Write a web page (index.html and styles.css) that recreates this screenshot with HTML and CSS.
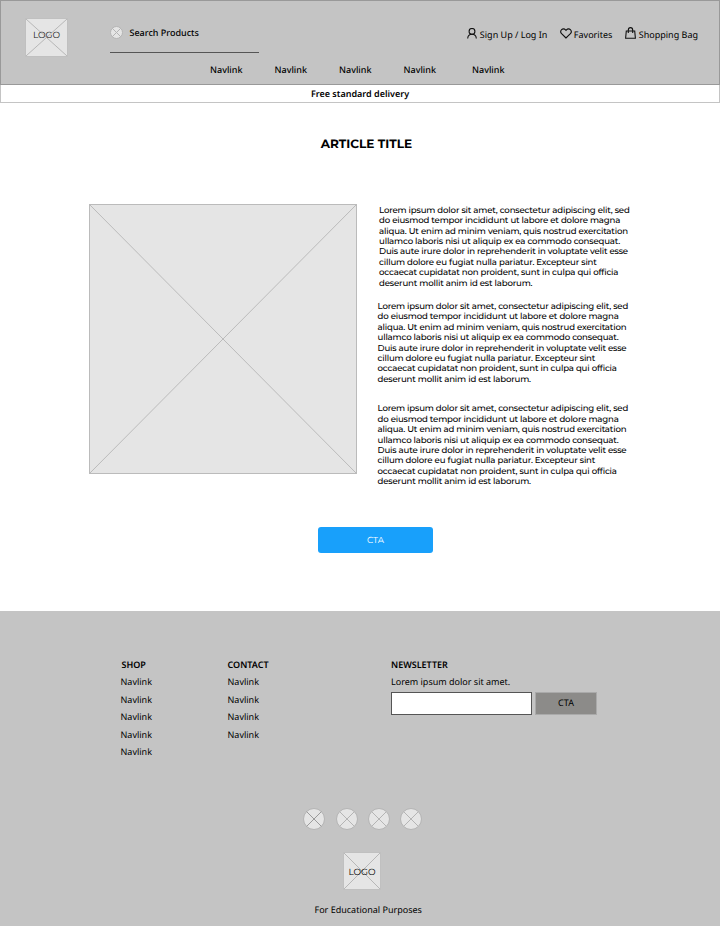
FILE: index.html
```html
<!DOCTYPE html>
<html lang="en">
<head>
<meta charset="utf-8">
<title>Article</title>
<link rel="stylesheet" href="styles.css">
</head>
<body>
<header class="header">
  <div class="logo">
    <svg viewBox="0 0 43 39" preserveAspectRatio="none"><path d="M0 0L43 39M43 0L0 39"/></svg>
    <span>LOGO</span>
  </div>
  <div class="header-main">
    <div class="top-row">
      <div class="search">
        <svg class="search-icon" viewBox="0 0 13 13"><circle cx="6.5" cy="6.5" r="6"/><path d="M2.3 2.3l8.4 8.4M10.7 2.3l-8.4 8.4"/></svg>
        <span>Search Products</span>
      </div>
      <div class="account">
        <a class="signup"><svg width="10" height="11" viewBox="0 0 10 11"><circle cx="5" cy="3.4" r="2.9"/><path d="M.7 10.5C.8 7.7 2.4 6.2 5 6.2s4.2 1.5 4.3 4.3"/></svg><span>Sign Up / Log In</span></a>
        <a class="favorites"><svg width="12" height="11" viewBox="0 0 12 11"><path d="M6 10L1.6 5.7C-.9 3 2.8-1 5.6 1.8L6 2.3l.4-.5C9.200-1 12.900 3 10.400 5.700Z"/></svg><span>Favorites</span></a>
        <a class="bag"><svg width="11" height="12" viewBox="0 0 11 12"><path d="M1.300 4h8.400l.7 7.300H.6ZM3.300 6V3.200C3.300-.2 7.700-.2 7.700 3.200V6"/></svg><span>Shopping Bag</span></a>
      </div>
    </div>
    <nav class="nav"><a>Navlink</a><a>Navlink</a><a>Navlink</a><a>Navlink</a><a>Navlink</a></nav>
  </div>
</header>
<div class="delivery">Free standard delivery</div>
<main>
  <h1>ARTICLE TITLE</h1>
  <div class="article">
    <svg class="picture" viewBox="0 0 268 270"><rect x=".5" y=".5" width="267" height="269"/><path d="M.5.5l267 269M267.500.5l-267 269"/></svg>
    <div class="copy">
      <p class="lead">Lorem ipsum dolor sit amet, consectetur adipiscing elit, sed<br>do eiusmod tempor incididunt ut labore et dolore magna<br>aliqua. Ut enim ad minim veniam, quis nostrud exercitation<br>ullamco laboris nisi ut aliquip ex ea commodo consequat.<br>Duis aute irure dolor in reprehenderit in voluptate velit esse<br>cillum dolore eu fugiat nulla pariatur. Excepteur sint<br>occaecat cupidatat non proident, sunt in culpa qui officia<br>deserunt mollit anim id est laborum.</p>
      <p>Lorem ipsum dolor sit amet, consectetur adipiscing elit, sed<br>do eiusmod tempor incididunt ut labore et dolore magna<br>aliqua. Ut enim ad minim veniam, quis nostrud exercitation<br>ullamco laboris nisi ut aliquip ex ea commodo consequat.<br>Duis aute irure dolor in reprehenderit in voluptate velit esse<br>cillum dolore eu fugiat nulla pariatur. Excepteur sint<br>occaecat cupidatat non proident, sunt in culpa qui officia<br>deserunt mollit anim id est laborum.</p>
      <p class="last">Lorem ipsum dolor sit amet, consectetur adipiscing elit, sed<br>do eiusmod tempor incididunt ut labore et dolore magna<br>aliqua. Ut enim ad minim veniam, quis nostrud exercitation<br>ullamco laboris nisi ut aliquip ex ea commodo consequat.<br>Duis aute irure dolor in reprehenderit in voluptate velit esse<br>cillum dolore eu fugiat nulla pariatur. Excepteur sint<br>occaecat cupidatat non proident, sunt in culpa qui officia<br>deserunt mollit anim id est laborum.</p>
    </div>
  </div>
  <a class="cta">CTA</a>
</main>
<footer class="footer">
  <div class="columns">
    <div class="shop"><h2>SHOP</h2><a>Navlink</a><a>Navlink</a><a>Navlink</a><a>Navlink</a><a>Navlink</a></div>
    <div class="contact"><h2>CONTACT</h2><a>Navlink</a><a>Navlink</a><a>Navlink</a><a>Navlink</a></div>
    <div class="newsletter">
      <h2>NEWSLETTER</h2>
      <p>Lorem ipsum dolor sit amet.</p>
      <div class="form"><div class="field"></div><div class="submit">CTA</div></div>
    </div>
  </div>
  <div class="social">
    <svg viewBox="0 0 22 22"><circle cx="11" cy="11" r="10.500"/><path class="dark" d="M3.600 3.600l14.800 14.800M18.400 3.600L3.600 18.400"/></svg>
    <svg viewBox="0 0 22 22"><circle cx="11" cy="11" r="10.500"/><path d="M3.600 3.600l14.800 14.800M18.400 3.600L3.600 18.400"/></svg>
    <svg viewBox="0 0 22 22"><circle cx="11" cy="11" r="10.500"/><path d="M3.600 3.600l14.800 14.800M18.400 3.600L3.600 18.400"/></svg>
    <svg viewBox="0 0 22 22"><circle cx="11" cy="11" r="10.500"/><path d="M3.600 3.600l14.800 14.800M18.400 3.600L3.600 18.400"/></svg>
  </div>
  <div class="logo logo-small">
    <svg viewBox="0 0 38 38"><path d="M0 0l38 38M38 0L0 38"/></svg>
    <span>LOGO</span>
  </div>
  <div class="legal">For Educational Purposes</div>
</footer>
</body>
</html>
```
FILE: styles.css
```css
* { box-sizing: border-box; }
body {
  margin: 0;
  background: #fff;
  color: #000;
  font: 9px/12px "Noto Sans", sans-serif;
  text-rendering: geometricPrecision;
}
svg { display: block; flex: none; fill: none; stroke: #b4b4b4; }
h1, h2, p { margin: 0; }
a, span { white-space: nowrap; }

.header {
  display: flex;
  height: 85px;
  padding: 17px 21px 0 24px;
  background: #c4c4c4;
  border: 1px solid #999;
}
.logo {
  display: grid;
  width: 43px;
  height: 39px;
  background: #e5e5e5;
  border: 1px solid #c0c0c0;
  color: #222;
  font: 9px/12px Montserrat, "Inter", sans-serif;
}
.logo svg { grid-area: 1 / 1; width: 100%; height: 100%; }
.logo span { grid-area: 1 / 1; place-self: center; padding-bottom: 4px; }
.header-main { flex: 1; margin-left: 42px; }
.top-row { display: flex; justify-content: space-between; height: 34px; }
.search {
  display: flex;
  gap: 6.500px;
  width: 149px;
  height: 35px;
  padding-top: 8px;
  border-bottom: 1px solid #555;
  font-weight: 500;
}
.search span { padding-top: 1px; }
.search-icon { width: 13px; height: 13px; fill: #e5e5e5; }
.account { display: flex; padding-top: 9px; }
.account a { display: flex; gap: 3px; }
.account svg { stroke: #111; stroke-width: 1.100; margin-top: 1px; }
.account span { padding-top: 2px; }
.account .favorites { margin-left: 13px; gap: 1.500px; }
.account .bag { margin-left: 13px; gap: 2.500px; }
.bag svg { margin-top: 0; }
.nav { display: flex; padding: 12px 0 0 100px; font-weight: 500; }
.nav a { width: 64.500px; }
.nav a:nth-child(4) { width: 68.500px; }

.delivery {
  height: 18px;
  line-height: 18px;
  text-align: center;
  font-weight: 600;
  border: 1px solid #c4c4c4;
  border-top: 0;
}

main { height: 508px; font-family: Montserrat, "Inter", sans-serif; }
h1 { padding: 34px 0 0 13px; font-size: 12.100px; line-height: 16px; font-weight: 700; text-align: center; }
.article { display: flex; padding: 51px 0 0 89px; }
.picture { width: 268px; height: 270px; fill: #e5e5e5; stroke: #bbb; }
.copy {
  height: 283px;
  padding-top: 1.600px;
  margin-left: 20.500px;
  white-space: nowrap;
  font-size: 8.580px;
  line-height: 10.460px;
  letter-spacing: -.157px;
  font-weight: 500;
}
.copy .lead { margin-left: 1.500px; }
.copy p + p { margin-top: 12.500px; }
.copy .last { margin-top: 18.800px; }
.cta {
  display: block;
  width: 115px;
  height: 26px;
  margin: 40px 0 0 318px;
  border-radius: 3px;
  background: #18a0fb;
  color: #fff;
  font-size: 8.700px;
  line-height: 28px;
  text-align: center;
}

.footer { height: 315px; padding-top: 48px; background: #c4c4c4; }
.columns { display: flex; height: 149px; padding-left: 120.500px; }
.columns a { display: block; height: 17.500px; }
.columns h2 { height: 17.400px; font-size: 9px; line-height: 12px; font-weight: 600; }
.shop { width: 107px; }
.shop h2 { padding-left: 1px; }
.contact { width: 163.500px; }
.form { display: flex; gap: 3px; margin-top: 3.600px; }
.field { width: 141px; height: 23px; background: #fff; border: 1px solid #555; }
.submit { width: 62px; height: 23px; background: #8c8b89; border: 1px solid #aaa; text-align: center; line-height: 20px; }
.social { display: flex; gap: 10.200px; padding-left: 303.400px; }
.social svg { width: 22px; height: 22px; fill: #e5e5e5; }
.social .dark { stroke: #888; stroke-width: .8; }
.logo-small { width: 38px; height: 38px; margin: 22px 0 0 343px; color: #000; }
.logo-small span { padding: 3px 0 0; }
.legal { padding: 14.400px 0 0 314.500px; }
```
